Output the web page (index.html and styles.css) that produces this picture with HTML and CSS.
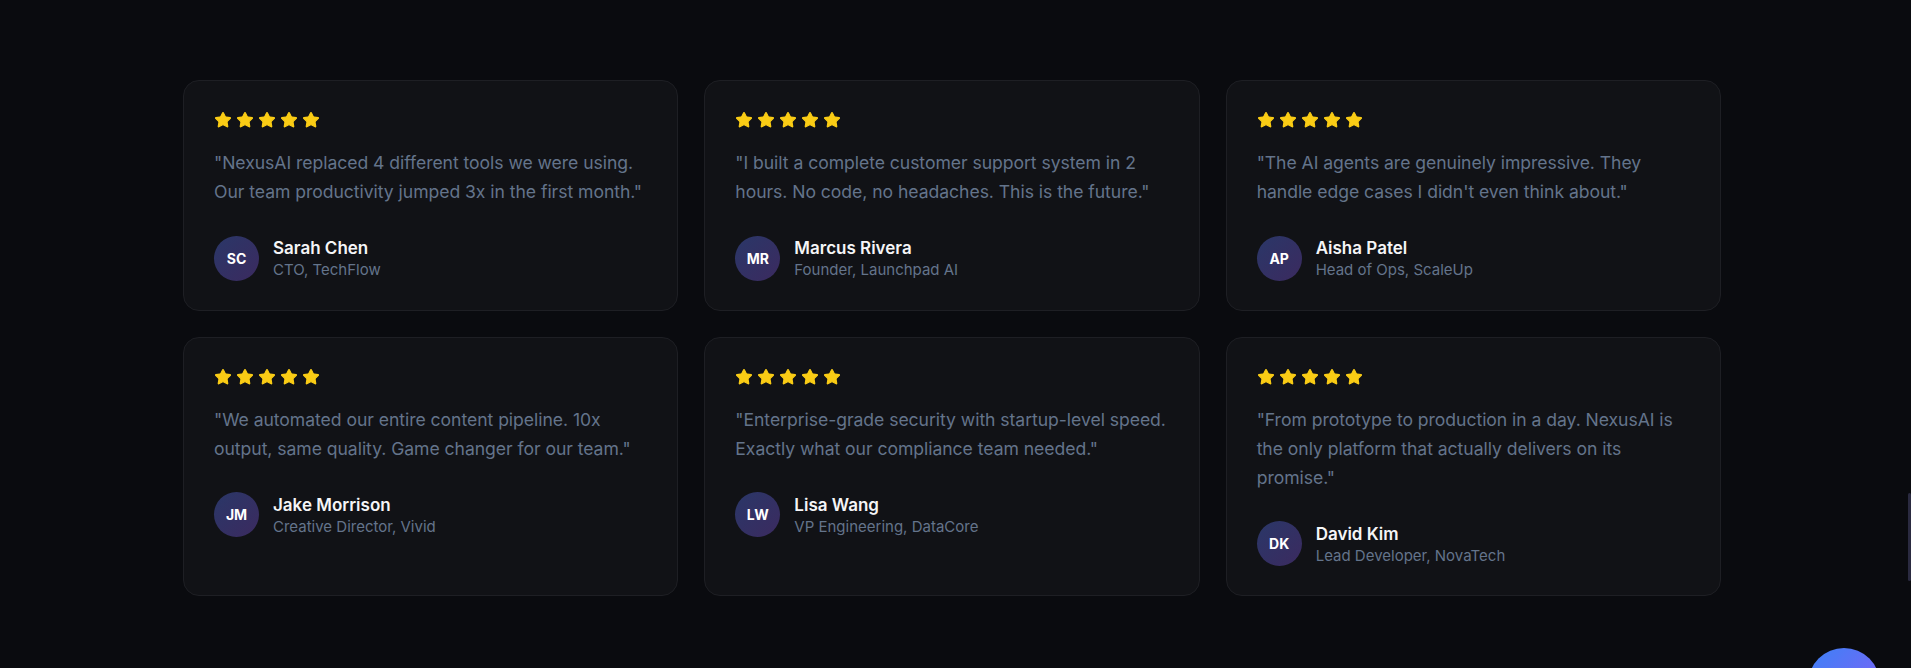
FILE: index.html
```html
<!DOCTYPE html>
<html lang="en">
<head>
    <meta charset="UTF-8">
    <meta name="viewport" content="width=device-width, initial-scale=1.0">
    <title>Testimonials</title>
    <link rel="stylesheet" href="styles.css">
</head>
<body>
    <section class="testimonials">
        <div class="testimonial-grid">
            <div class="testimonial-card">
                <div class="stars">
                    <svg viewBox="0 0 24 24"><path d="M11.525 2.295a.53.53 0 0 1 .95 0l2.31 4.679a2.123 2.123 0 0 0 1.595 1.16l5.166.756a.53.53 0 0 1 .294.904l-3.736 3.638a2.123 2.123 0 0 0-.611 1.878l.882 5.14a.53.53 0 0 1-.771.56l-4.618-2.428a2.122 2.122 0 0 0-1.973 0L6.396 21.01a.53.53 0 0 1-.77-.56l.881-5.139a2.122 2.122 0 0 0-.611-1.879L2.16 9.795a.53.53 0 0 1 .294-.906l5.165-.755a2.122 2.122 0 0 0 1.597-1.16z"/></svg>
                    <svg viewBox="0 0 24 24"><path d="M11.525 2.295a.53.53 0 0 1 .95 0l2.31 4.679a2.123 2.123 0 0 0 1.595 1.16l5.166.756a.53.53 0 0 1 .294.904l-3.736 3.638a2.123 2.123 0 0 0-.611 1.878l.882 5.14a.53.53 0 0 1-.771.56l-4.618-2.428a2.122 2.122 0 0 0-1.973 0L6.396 21.01a.53.53 0 0 1-.77-.56l.881-5.139a2.122 2.122 0 0 0-.611-1.879L2.16 9.795a.53.53 0 0 1 .294-.906l5.165-.755a2.122 2.122 0 0 0 1.597-1.16z"/></svg>
                    <svg viewBox="0 0 24 24"><path d="M11.525 2.295a.53.53 0 0 1 .95 0l2.31 4.679a2.123 2.123 0 0 0 1.595 1.16l5.166.756a.53.53 0 0 1 .294.904l-3.736 3.638a2.123 2.123 0 0 0-.611 1.878l.882 5.14a.53.53 0 0 1-.771.56l-4.618-2.428a2.122 2.122 0 0 0-1.973 0L6.396 21.01a.53.53 0 0 1-.77-.56l.881-5.139a2.122 2.122 0 0 0-.611-1.879L2.16 9.795a.53.53 0 0 1 .294-.906l5.165-.755a2.122 2.122 0 0 0 1.597-1.16z"/></svg>
                    <svg viewBox="0 0 24 24"><path d="M11.525 2.295a.53.53 0 0 1 .95 0l2.31 4.679a2.123 2.123 0 0 0 1.595 1.16l5.166.756a.53.53 0 0 1 .294.904l-3.736 3.638a2.123 2.123 0 0 0-.611 1.878l.882 5.14a.53.53 0 0 1-.771.56l-4.618-2.428a2.122 2.122 0 0 0-1.973 0L6.396 21.01a.53.53 0 0 1-.77-.56l.881-5.139a2.122 2.122 0 0 0-.611-1.879L2.16 9.795a.53.53 0 0 1 .294-.906l5.165-.755a2.122 2.122 0 0 0 1.597-1.16z"/></svg>
                    <svg viewBox="0 0 24 24"><path d="M11.525 2.295a.53.53 0 0 1 .95 0l2.31 4.679a2.123 2.123 0 0 0 1.595 1.16l5.166.756a.53.53 0 0 1 .294.904l-3.736 3.638a2.123 2.123 0 0 0-.611 1.878l.882 5.14a.53.53 0 0 1-.771.56l-4.618-2.428a2.122 2.122 0 0 0-1.973 0L6.396 21.01a.53.53 0 0 1-.77-.56l.881-5.139a2.122 2.122 0 0 0-.611-1.879L2.16 9.795a.53.53 0 0 1 .294-.906l5.165-.755a2.122 2.122 0 0 0 1.597-1.16z"/></svg>
                </div>
                <p class="quote">"NexusAI replaced 4 different tools we were using. Our team productivity jumped 3x in the first month."</p>
                <div class="author">
                    <div class="avatar">SC</div>
                    <div>
                        <div class="author-name">Sarah Chen</div>
                        <div class="author-role">CTO, TechFlow</div>
                    </div>
                </div>
            </div>

            <div class="testimonial-card">
                <div class="stars">
                    <svg viewBox="0 0 24 24"><path d="M11.525 2.295a.53.53 0 0 1 .95 0l2.31 4.679a2.123 2.123 0 0 0 1.595 1.16l5.166.756a.53.53 0 0 1 .294.904l-3.736 3.638a2.123 2.123 0 0 0-.611 1.878l.882 5.14a.53.53 0 0 1-.771.56l-4.618-2.428a2.122 2.122 0 0 0-1.973 0L6.396 21.01a.53.53 0 0 1-.77-.56l.881-5.139a2.122 2.122 0 0 0-.611-1.879L2.16 9.795a.53.53 0 0 1 .294-.906l5.165-.755a2.122 2.122 0 0 0 1.597-1.16z"/></svg>
                    <svg viewBox="0 0 24 24"><path d="M11.525 2.295a.53.53 0 0 1 .95 0l2.31 4.679a2.123 2.123 0 0 0 1.595 1.16l5.166.756a.53.53 0 0 1 .294.904l-3.736 3.638a2.123 2.123 0 0 0-.611 1.878l.882 5.14a.53.53 0 0 1-.771.56l-4.618-2.428a2.122 2.122 0 0 0-1.973 0L6.396 21.01a.53.53 0 0 1-.77-.56l.881-5.139a2.122 2.122 0 0 0-.611-1.879L2.16 9.795a.53.53 0 0 1 .294-.906l5.165-.755a2.122 2.122 0 0 0 1.597-1.16z"/></svg>
                    <svg viewBox="0 0 24 24"><path d="M11.525 2.295a.53.53 0 0 1 .95 0l2.31 4.679a2.123 2.123 0 0 0 1.595 1.16l5.166.756a.53.53 0 0 1 .294.904l-3.736 3.638a2.123 2.123 0 0 0-.611 1.878l.882 5.14a.53.53 0 0 1-.771.56l-4.618-2.428a2.122 2.122 0 0 0-1.973 0L6.396 21.01a.53.53 0 0 1-.77-.56l.881-5.139a2.122 2.122 0 0 0-.611-1.879L2.16 9.795a.53.53 0 0 1 .294-.906l5.165-.755a2.122 2.122 0 0 0 1.597-1.16z"/></svg>
                    <svg viewBox="0 0 24 24"><path d="M11.525 2.295a.53.53 0 0 1 .95 0l2.31 4.679a2.123 2.123 0 0 0 1.595 1.16l5.166.756a.53.53 0 0 1 .294.904l-3.736 3.638a2.123 2.123 0 0 0-.611 1.878l.882 5.14a.53.53 0 0 1-.771.56l-4.618-2.428a2.122 2.122 0 0 0-1.973 0L6.396 21.01a.53.53 0 0 1-.77-.56l.881-5.139a2.122 2.122 0 0 0-.611-1.879L2.16 9.795a.53.53 0 0 1 .294-.906l5.165-.755a2.122 2.122 0 0 0 1.597-1.16z"/></svg>
                    <svg viewBox="0 0 24 24"><path d="M11.525 2.295a.53.53 0 0 1 .95 0l2.31 4.679a2.123 2.123 0 0 0 1.595 1.16l5.166.756a.53.53 0 0 1 .294.904l-3.736 3.638a2.123 2.123 0 0 0-.611 1.878l.882 5.14a.53.53 0 0 1-.771.56l-4.618-2.428a2.122 2.122 0 0 0-1.973 0L6.396 21.01a.53.53 0 0 1-.77-.56l.881-5.139a2.122 2.122 0 0 0-.611-1.879L2.16 9.795a.53.53 0 0 1 .294-.906l5.165-.755a2.122 2.122 0 0 0 1.597-1.16z"/></svg>
                </div>
                <p class="quote">"I built a complete customer support system in 2 hours. No code, no headaches. This is the future."</p>
                <div class="author">
                    <div class="avatar">MR</div>
                    <div>
                        <div class="author-name">Marcus Rivera</div>
                        <div class="author-role">Founder, Launchpad AI</div>
                    </div>
                </div>
            </div>

            <div class="testimonial-card">
                <div class="stars">
                    <svg viewBox="0 0 24 24"><path d="M11.525 2.295a.53.53 0 0 1 .95 0l2.31 4.679a2.123 2.123 0 0 0 1.595 1.16l5.166.756a.53.53 0 0 1 .294.904l-3.736 3.638a2.123 2.123 0 0 0-.611 1.878l.882 5.14a.53.53 0 0 1-.771.56l-4.618-2.428a2.122 2.122 0 0 0-1.973 0L6.396 21.01a.53.53 0 0 1-.77-.56l.881-5.139a2.122 2.122 0 0 0-.611-1.879L2.16 9.795a.53.53 0 0 1 .294-.906l5.165-.755a2.122 2.122 0 0 0 1.597-1.16z"/></svg>
                    <svg viewBox="0 0 24 24"><path d="M11.525 2.295a.53.53 0 0 1 .95 0l2.31 4.679a2.123 2.123 0 0 0 1.595 1.16l5.166.756a.53.53 0 0 1 .294.904l-3.736 3.638a2.123 2.123 0 0 0-.611 1.878l.882 5.14a.53.53 0 0 1-.771.56l-4.618-2.428a2.122 2.122 0 0 0-1.973 0L6.396 21.01a.53.53 0 0 1-.77-.56l.881-5.139a2.122 2.122 0 0 0-.611-1.879L2.16 9.795a.53.53 0 0 1 .294-.906l5.165-.755a2.122 2.122 0 0 0 1.597-1.16z"/></svg>
                    <svg viewBox="0 0 24 24"><path d="M11.525 2.295a.53.53 0 0 1 .95 0l2.31 4.679a2.123 2.123 0 0 0 1.595 1.16l5.166.756a.53.53 0 0 1 .294.904l-3.736 3.638a2.123 2.123 0 0 0-.611 1.878l.882 5.14a.53.53 0 0 1-.771.56l-4.618-2.428a2.122 2.122 0 0 0-1.973 0L6.396 21.01a.53.53 0 0 1-.77-.56l.881-5.139a2.122 2.122 0 0 0-.611-1.879L2.16 9.795a.53.53 0 0 1 .294-.906l5.165-.755a2.122 2.122 0 0 0 1.597-1.16z"/></svg>
                    <svg viewBox="0 0 24 24"><path d="M11.525 2.295a.53.53 0 0 1 .95 0l2.31 4.679a2.123 2.123 0 0 0 1.595 1.16l5.166.756a.53.53 0 0 1 .294.904l-3.736 3.638a2.123 2.123 0 0 0-.611 1.878l.882 5.14a.53.53 0 0 1-.771.56l-4.618-2.428a2.122 2.122 0 0 0-1.973 0L6.396 21.01a.53.53 0 0 1-.77-.56l.881-5.139a2.122 2.122 0 0 0-.611-1.879L2.16 9.795a.53.53 0 0 1 .294-.906l5.165-.755a2.122 2.122 0 0 0 1.597-1.16z"/></svg>
                    <svg viewBox="0 0 24 24"><path d="M11.525 2.295a.53.53 0 0 1 .95 0l2.31 4.679a2.123 2.123 0 0 0 1.595 1.16l5.166.756a.53.53 0 0 1 .294.904l-3.736 3.638a2.123 2.123 0 0 0-.611 1.878l.882 5.14a.53.53 0 0 1-.771.56l-4.618-2.428a2.122 2.122 0 0 0-1.973 0L6.396 21.01a.53.53 0 0 1-.77-.56l.881-5.139a2.122 2.122 0 0 0-.611-1.879L2.16 9.795a.53.53 0 0 1 .294-.906l5.165-.755a2.122 2.122 0 0 0 1.597-1.16z"/></svg>
                </div>
                <p class="quote">"The AI agents are genuinely impressive. They handle edge cases I didn't even think about."</p>
                <div class="author">
                    <div class="avatar">AP</div>
                    <div>
                        <div class="author-name">Aisha Patel</div>
                        <div class="author-role">Head of Ops, ScaleUp</div>
                    </div>
                </div>
            </div>

            <div class="testimonial-card">
                <div class="stars">
                    <svg viewBox="0 0 24 24"><path d="M11.525 2.295a.53.53 0 0 1 .95 0l2.31 4.679a2.123 2.123 0 0 0 1.595 1.16l5.166.756a.53.53 0 0 1 .294.904l-3.736 3.638a2.123 2.123 0 0 0-.611 1.878l.882 5.14a.53.53 0 0 1-.771.56l-4.618-2.428a2.122 2.122 0 0 0-1.973 0L6.396 21.01a.53.53 0 0 1-.77-.56l.881-5.139a2.122 2.122 0 0 0-.611-1.879L2.16 9.795a.53.53 0 0 1 .294-.906l5.165-.755a2.122 2.122 0 0 0 1.597-1.16z"/></svg>
                    <svg viewBox="0 0 24 24"><path d="M11.525 2.295a.53.53 0 0 1 .95 0l2.31 4.679a2.123 2.123 0 0 0 1.595 1.16l5.166.756a.53.53 0 0 1 .294.904l-3.736 3.638a2.123 2.123 0 0 0-.611 1.878l.882 5.14a.53.53 0 0 1-.771.56l-4.618-2.428a2.122 2.122 0 0 0-1.973 0L6.396 21.01a.53.53 0 0 1-.77-.56l.881-5.139a2.122 2.122 0 0 0-.611-1.879L2.16 9.795a.53.53 0 0 1 .294-.906l5.165-.755a2.122 2.122 0 0 0 1.597-1.16z"/></svg>
                    <svg viewBox="0 0 24 24"><path d="M11.525 2.295a.53.53 0 0 1 .95 0l2.31 4.679a2.123 2.123 0 0 0 1.595 1.16l5.166.756a.53.53 0 0 1 .294.904l-3.736 3.638a2.123 2.123 0 0 0-.611 1.878l.882 5.14a.53.53 0 0 1-.771.56l-4.618-2.428a2.122 2.122 0 0 0-1.973 0L6.396 21.01a.53.53 0 0 1-.77-.56l.881-5.139a2.122 2.122 0 0 0-.611-1.879L2.16 9.795a.53.53 0 0 1 .294-.906l5.165-.755a2.122 2.122 0 0 0 1.597-1.16z"/></svg>
                    <svg viewBox="0 0 24 24"><path d="M11.525 2.295a.53.53 0 0 1 .95 0l2.31 4.679a2.123 2.123 0 0 0 1.595 1.16l5.166.756a.53.53 0 0 1 .294.904l-3.736 3.638a2.123 2.123 0 0 0-.611 1.878l.882 5.14a.53.53 0 0 1-.771.56l-4.618-2.428a2.122 2.122 0 0 0-1.973 0L6.396 21.01a.53.53 0 0 1-.77-.56l.881-5.139a2.122 2.122 0 0 0-.611-1.879L2.16 9.795a.53.53 0 0 1 .294-.906l5.165-.755a2.122 2.122 0 0 0 1.597-1.16z"/></svg>
                    <svg viewBox="0 0 24 24"><path d="M11.525 2.295a.53.53 0 0 1 .95 0l2.31 4.679a2.123 2.123 0 0 0 1.595 1.16l5.166.756a.53.53 0 0 1 .294.904l-3.736 3.638a2.123 2.123 0 0 0-.611 1.878l.882 5.14a.53.53 0 0 1-.771.56l-4.618-2.428a2.122 2.122 0 0 0-1.973 0L6.396 21.01a.53.53 0 0 1-.77-.56l.881-5.139a2.122 2.122 0 0 0-.611-1.879L2.16 9.795a.53.53 0 0 1 .294-.906l5.165-.755a2.122 2.122 0 0 0 1.597-1.16z"/></svg>
                </div>
                <p class="quote">"We automated our entire content pipeline. 10x output, same quality. Game changer for our team."</p>
                <div class="author">
                    <div class="avatar">JM</div>
                    <div>
                        <div class="author-name">Jake Morrison</div>
                        <div class="author-role">Creative Director, Vivid</div>
                    </div>
                </div>
            </div>

            <div class="testimonial-card">
                <div class="stars">
                    <svg viewBox="0 0 24 24"><path d="M11.525 2.295a.53.53 0 0 1 .95 0l2.31 4.679a2.123 2.123 0 0 0 1.595 1.16l5.166.756a.53.53 0 0 1 .294.904l-3.736 3.638a2.123 2.123 0 0 0-.611 1.878l.882 5.14a.53.53 0 0 1-.771.56l-4.618-2.428a2.122 2.122 0 0 0-1.973 0L6.396 21.01a.53.53 0 0 1-.77-.56l.881-5.139a2.122 2.122 0 0 0-.611-1.879L2.16 9.795a.53.53 0 0 1 .294-.906l5.165-.755a2.122 2.122 0 0 0 1.597-1.16z"/></svg>
                    <svg viewBox="0 0 24 24"><path d="M11.525 2.295a.53.53 0 0 1 .95 0l2.31 4.679a2.123 2.123 0 0 0 1.595 1.16l5.166.756a.53.53 0 0 1 .294.904l-3.736 3.638a2.123 2.123 0 0 0-.611 1.878l.882 5.14a.53.53 0 0 1-.771.56l-4.618-2.428a2.122 2.122 0 0 0-1.973 0L6.396 21.01a.53.53 0 0 1-.77-.56l.881-5.139a2.122 2.122 0 0 0-.611-1.879L2.16 9.795a.53.53 0 0 1 .294-.906l5.165-.755a2.122 2.122 0 0 0 1.597-1.16z"/></svg>
                    <svg viewBox="0 0 24 24"><path d="M11.525 2.295a.53.53 0 0 1 .95 0l2.31 4.679a2.123 2.123 0 0 0 1.595 1.16l5.166.756a.53.53 0 0 1 .294.904l-3.736 3.638a2.123 2.123 0 0 0-.611 1.878l.882 5.14a.53.53 0 0 1-.771.56l-4.618-2.428a2.122 2.122 0 0 0-1.973 0L6.396 21.01a.53.53 0 0 1-.77-.56l.881-5.139a2.122 2.122 0 0 0-.611-1.879L2.16 9.795a.53.53 0 0 1 .294-.906l5.165-.755a2.122 2.122 0 0 0 1.597-1.16z"/></svg>
                    <svg viewBox="0 0 24 24"><path d="M11.525 2.295a.53.53 0 0 1 .95 0l2.31 4.679a2.123 2.123 0 0 0 1.595 1.16l5.166.756a.53.53 0 0 1 .294.904l-3.736 3.638a2.123 2.123 0 0 0-.611 1.878l.882 5.14a.53.53 0 0 1-.771.56l-4.618-2.428a2.122 2.122 0 0 0-1.973 0L6.396 21.01a.53.53 0 0 1-.77-.56l.881-5.139a2.122 2.122 0 0 0-.611-1.879L2.16 9.795a.53.53 0 0 1 .294-.906l5.165-.755a2.122 2.122 0 0 0 1.597-1.16z"/></svg>
                    <svg viewBox="0 0 24 24"><path d="M11.525 2.295a.53.53 0 0 1 .95 0l2.31 4.679a2.123 2.123 0 0 0 1.595 1.16l5.166.756a.53.53 0 0 1 .294.904l-3.736 3.638a2.123 2.123 0 0 0-.611 1.878l.882 5.14a.53.53 0 0 1-.771.56l-4.618-2.428a2.122 2.122 0 0 0-1.973 0L6.396 21.01a.53.53 0 0 1-.77-.56l.881-5.139a2.122 2.122 0 0 0-.611-1.879L2.16 9.795a.53.53 0 0 1 .294-.906l5.165-.755a2.122 2.122 0 0 0 1.597-1.16z"/></svg>
                </div>
                <p class="quote">"Enterprise-grade security with startup-level speed. Exactly what our compliance team needed."</p>
                <div class="author">
                    <div class="avatar">LW</div>
                    <div>
                        <div class="author-name">Lisa Wang</div>
                        <div class="author-role">VP Engineering, DataCore</div>
                    </div>
                </div>
            </div>

            <div class="testimonial-card">
                <div class="stars">
                    <svg viewBox="0 0 24 24"><path d="M11.525 2.295a.53.53 0 0 1 .95 0l2.31 4.679a2.123 2.123 0 0 0 1.595 1.16l5.166.756a.53.53 0 0 1 .294.904l-3.736 3.638a2.123 2.123 0 0 0-.611 1.878l.882 5.14a.53.53 0 0 1-.771.56l-4.618-2.428a2.122 2.122 0 0 0-1.973 0L6.396 21.01a.53.53 0 0 1-.77-.56l.881-5.139a2.122 2.122 0 0 0-.611-1.879L2.16 9.795a.53.53 0 0 1 .294-.906l5.165-.755a2.122 2.122 0 0 0 1.597-1.16z"/></svg>
                    <svg viewBox="0 0 24 24"><path d="M11.525 2.295a.53.53 0 0 1 .95 0l2.31 4.679a2.123 2.123 0 0 0 1.595 1.16l5.166.756a.53.53 0 0 1 .294.904l-3.736 3.638a2.123 2.123 0 0 0-.611 1.878l.882 5.14a.53.53 0 0 1-.771.56l-4.618-2.428a2.122 2.122 0 0 0-1.973 0L6.396 21.01a.53.53 0 0 1-.77-.56l.881-5.139a2.122 2.122 0 0 0-.611-1.879L2.16 9.795a.53.53 0 0 1 .294-.906l5.165-.755a2.122 2.122 0 0 0 1.597-1.16z"/></svg>
                    <svg viewBox="0 0 24 24"><path d="M11.525 2.295a.53.53 0 0 1 .95 0l2.31 4.679a2.123 2.123 0 0 0 1.595 1.16l5.166.756a.53.53 0 0 1 .294.904l-3.736 3.638a2.123 2.123 0 0 0-.611 1.878l.882 5.14a.53.53 0 0 1-.771.56l-4.618-2.428a2.122 2.122 0 0 0-1.973 0L6.396 21.01a.53.53 0 0 1-.77-.56l.881-5.139a2.122 2.122 0 0 0-.611-1.879L2.16 9.795a.53.53 0 0 1 .294-.906l5.165-.755a2.122 2.122 0 0 0 1.597-1.16z"/></svg>
                    <svg viewBox="0 0 24 24"><path d="M11.525 2.295a.53.53 0 0 1 .95 0l2.31 4.679a2.123 2.123 0 0 0 1.595 1.16l5.166.756a.53.53 0 0 1 .294.904l-3.736 3.638a2.123 2.123 0 0 0-.611 1.878l.882 5.14a.53.53 0 0 1-.771.56l-4.618-2.428a2.122 2.122 0 0 0-1.973 0L6.396 21.01a.53.53 0 0 1-.77-.56l.881-5.139a2.122 2.122 0 0 0-.611-1.879L2.16 9.795a.53.53 0 0 1 .294-.906l5.165-.755a2.122 2.122 0 0 0 1.597-1.16z"/></svg>
                    <svg viewBox="0 0 24 24"><path d="M11.525 2.295a.53.53 0 0 1 .95 0l2.31 4.679a2.123 2.123 0 0 0 1.595 1.16l5.166.756a.53.53 0 0 1 .294.904l-3.736 3.638a2.123 2.123 0 0 0-.611 1.878l.882 5.14a.53.53 0 0 1-.771.56l-4.618-2.428a2.122 2.122 0 0 0-1.973 0L6.396 21.01a.53.53 0 0 1-.77-.56l.881-5.139a2.122 2.122 0 0 0-.611-1.879L2.16 9.795a.53.53 0 0 1 .294-.906l5.165-.755a2.122 2.122 0 0 0 1.597-1.16z"/></svg>
                </div>
                <p class="quote">"From prototype to production in a day. NexusAI is the only platform that actually delivers on its promise."</p>
                <div class="author">
                    <div class="avatar">DK</div>
                    <div>
                        <div class="author-name">David Kim</div>
                        <div class="author-role">Lead Developer, NovaTech</div>
                    </div>
                </div>
            </div>
        </div>
    </section>

    <div class="scroll-thumb"></div>
    <button class="chat-button" aria-label="Open chat"></button>
</body>
</html>
```

FILE: styles.css
```css
* {
    margin: 0;
    padding: 0;
    box-sizing: border-box;
}

html {
    overflow: hidden;
}

body {
    min-height: 100vh;
    background-color: #0a0b0f;
    font-family: Inter, "Noto Sans", sans-serif;
}

.testimonials {
    padding: 80px 7px 80px 0;
}

.testimonial-grid {
    max-width: 1538px;
    margin: 0 auto;
    display: grid;
    grid-template-columns: repeat(3, 1fr);
    gap: 26px;
}

.testimonial-card {
    background-color: #111216;
    border: 1px solid #1e1f24;
    border-radius: 16px;
    padding: 30px 30px 29px;
}

.stars {
    display: flex;
    gap: 4px;
    margin-bottom: 19px;
}

.stars svg {
    width: 18px;
    height: 18px;
    display: block;
    fill: #facc15;
    stroke: #facc15;
    stroke-width: 1.5;
    stroke-linejoin: round;
}

.quote {
    font-size: 17.6px;
    line-height: 29.25px;
    letter-spacing: -0.05px;
    color: #64748b;
    margin-bottom: 29px;
}

.author {
    display: flex;
    align-items: center;
    gap: 14px;
}

.avatar {
    width: 45px;
    height: 45px;
    border-radius: 50%;
    background: linear-gradient(135deg, #2a3768, #3b2a5f);
    color: #fff;
    font-size: 14px;
    font-weight: 700;
    display: flex;
    align-items: center;
    justify-content: center;
}

.author-name {
    font-size: 17px;
    line-height: 24px;
    font-weight: 600;
    color: #f5f5f7;
}

.author-role {
    font-size: 15px;
    line-height: 20px;
    color: #64748b;
}

.scroll-thumb {
    position: fixed;
    right: 0;
    top: 493px;
    width: 3px;
    height: 88px;
    border-radius: 2px;
    background-color: #2a2a40;
}

.chat-button {
    position: fixed;
    right: 31px;
    bottom: -52px;
    width: 72px;
    height: 72px;
    border: none;
    border-radius: 50%;
    background: linear-gradient(135deg, #3b82f6, #8b5cf6);
    cursor: pointer;
}
```
